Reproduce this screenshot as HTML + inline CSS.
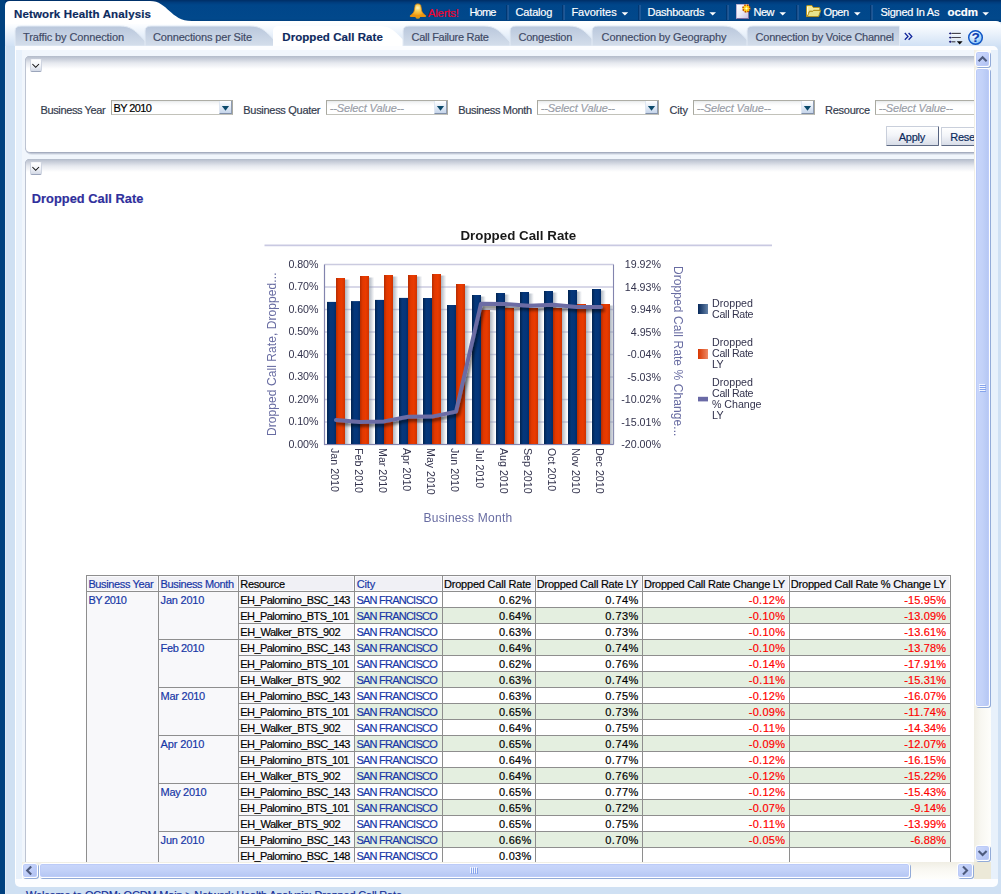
<!DOCTYPE html>
<html><head><meta charset="utf-8"><title>Network Health Analysis</title>
<style>
html,body{margin:0;padding:0;overflow:hidden}
body{width:1001px;height:894px;overflow:hidden;position:relative;background:#cfe0f3;font-family:"Liberation Sans",sans-serif}
.a{position:absolute;box-sizing:border-box}
.t{position:absolute;white-space:nowrap;margin:0;padding:0;-webkit-text-stroke:0.18px currentColor}
.g .t{-webkit-text-stroke:0}
svg{position:absolute;overflow:visible}
</style></head><body>
<div class="a" style="left:0;top:0;width:1001px;height:894px;overflow:hidden;background:#cfe0f3">
<div class="a" style="left:0px;top:0px;width:1001px;height:22px;background:linear-gradient(#002e66 0,#003d7e 2.5px,#00468a 5px,#01488b 19px,#003f80 21px)"></div>
<div class="a" style="left:0px;top:0px;width:5px;height:894px;background:#00417f"></div>
<svg width="1001" height="60" style="left:0;top:0">
<defs>
<linearGradient id="rowbg" x1="0" y1="0" x2="0" y2="1"><stop offset="0" stop-color="#ffffff"/><stop offset="0.15" stop-color="#fbfdff"/><stop offset="1" stop-color="#cfe0f4"/></linearGradient>
<linearGradient id="tabg" x1="0" y1="0" x2="0" y2="1"><stop offset="0" stop-color="#b9c7dc"/><stop offset="1" stop-color="#d4deeb"/></linearGradient>
</defs>
<path d="M5 47 L5 21 L996 21 Q1001 21 1001 26 L1001 47 Z" fill="url(#rowbg)"/>
<path d="M5 24 L5 6 Q5 1 10 1 L150 1 C168 1 170 21 192 21 L192 24 Z" fill="#ffffff"/>
</svg>
<div class="t" style="left:14.00px;top:6.02px;font-size:11.5px;line-height:16px;color:#0b2a5e;font-weight:bold;letter-spacing:0.146px;">Network Health Analysis</div>
<div class="t" style="left:428.00px;top:4.69px;font-size:11px;line-height:16px;color:#f5002a;letter-spacing:-0.079px;">Alerts!</div>
<div class="t" style="left:469.40px;top:4.19px;font-size:11px;line-height:16px;color:#ffffff;letter-spacing:-0.781px;">Home</div>
<div class="t" style="left:515.60px;top:4.19px;font-size:11px;line-height:16px;color:#ffffff;letter-spacing:-0.186px;">Catalog</div>
<div class="t" style="left:571.40px;top:4.19px;font-size:11px;line-height:16px;color:#ffffff;">Favorites</div>
<div class="t" style="left:647.60px;top:4.19px;font-size:11px;line-height:16px;color:#ffffff;letter-spacing:-0.279px;">Dashboards</div>
<div class="t" style="left:753.60px;top:4.19px;font-size:11px;line-height:16px;color:#ffffff;letter-spacing:-0.603px;">New</div>
<div class="t" style="left:823.60px;top:4.19px;font-size:11px;line-height:16px;color:#ffffff;letter-spacing:-0.503px;">Open</div>
<div class="t" style="left:880.40px;top:4.19px;font-size:11px;line-height:16px;color:#ffffff;letter-spacing:-0.252px;">Signed In As</div>
<div class="t" style="left:947.60px;top:4.02px;font-size:11.5px;line-height:16px;color:#ffffff;font-weight:bold;letter-spacing:-0.090px;">ocdm</div>
<svg width="1001" height="22" style="left:0;top:0"><line x1="507.0" y1="5" x2="507.0" y2="20" stroke="#00285a" stroke-width="1"/><line x1="508.0" y1="5" x2="508.0" y2="20" stroke="#3a6aa6" stroke-width="1"/><line x1="563.0" y1="5" x2="563.0" y2="20" stroke="#00285a" stroke-width="1"/><line x1="564.0" y1="5" x2="564.0" y2="20" stroke="#3a6aa6" stroke-width="1"/><line x1="639.0" y1="5" x2="639.0" y2="20" stroke="#00285a" stroke-width="1"/><line x1="640.0" y1="5" x2="640.0" y2="20" stroke="#3a6aa6" stroke-width="1"/><line x1="727.0" y1="5" x2="727.0" y2="20" stroke="#00285a" stroke-width="1"/><line x1="728.0" y1="5" x2="728.0" y2="20" stroke="#3a6aa6" stroke-width="1"/><line x1="797.0" y1="5" x2="797.0" y2="20" stroke="#00285a" stroke-width="1"/><line x1="798.0" y1="5" x2="798.0" y2="20" stroke="#3a6aa6" stroke-width="1"/><line x1="871.0" y1="5" x2="871.0" y2="20" stroke="#00285a" stroke-width="1"/><line x1="872.0" y1="5" x2="872.0" y2="20" stroke="#3a6aa6" stroke-width="1"/><path d="M621.6 12.2 L628.2 12.2 L624.9 15.6 Z" fill="#ffffff"/><path d="M709.4 12.2 L716.0 12.2 L712.6999999999999 15.6 Z" fill="#ffffff"/><path d="M779.4 12.2 L786.0 12.2 L782.6999999999999 15.6 Z" fill="#ffffff"/><path d="M854 12.2 L860.6 12.2 L857.3 15.6 Z" fill="#ffffff"/><path d="M982.4 12.2 L989.0 12.2 L985.6999999999999 15.6 Z" fill="#ffffff"/><defs><radialGradient id="bellg" cx="0.48" cy="0.32" r="0.62"><stop offset="0" stop-color="#fff6c4"/><stop offset="0.35" stop-color="#f9d25c"/><stop offset="0.8" stop-color="#f3ad25"/><stop offset="1" stop-color="#ea920e"/></radialGradient></defs>
<ellipse cx="417.8" cy="17.2" rx="2.1" ry="1.6" fill="#d79a18"/>
<path d="M415 6.4 C415 4.6 416.2 3.9 417.9 3.9 C419.6 3.9 420.9 4.6 420.9 6.4 L421.6 10.6 C421.9 12.6 423.6 14.2 425.6 15.6 L425.6 16.5 L410.3 16.5 L410.3 15.6 C412.3 14.2 414 12.6 414.3 10.6 Z" fill="url(#bellg)" stroke="#e58c0a" stroke-width="0.8"/>
<path d="M410.6 16.1 L425.4 16.1" stroke="#ef9a14" stroke-width="1.2"/>
<defs><linearGradient id="docg" x1="0" y1="0" x2="1" y2="1"><stop offset="0" stop-color="#ffffff"/><stop offset="0.5" stop-color="#ecebf7"/><stop offset="1" stop-color="#c4c0e2"/></linearGradient>
<radialGradient id="starg" cx="0.5" cy="0.5" r="0.5"><stop offset="0" stop-color="#fffbe0"/><stop offset="0.45" stop-color="#ffe02a"/><stop offset="1" stop-color="#ffc400"/></radialGradient></defs>
<rect x="737.2" y="5.2" width="12.4" height="14.2" fill="#00306a" opacity="0.45"/>
<rect x="736.5" y="4.5" width="12" height="14" fill="url(#docg)" stroke="#7d6fa2" stroke-width="1"/>
<path d="M736.5 18.5 L736.5 4.5 L748.5 4.5" fill="none" stroke="#b9b2d3" stroke-width="1"/>
<circle cx="746.4" cy="8.4" r="3.5" fill="#f2b21a" stroke="#b84200" stroke-width="1.5" stroke-dasharray="1.6 1.15"/>
<path d="M746.4 3.9 L747.5 7.3 L750.9 8.4 L747.5 9.5 L746.4 12.9 L745.3 9.5 L741.9 8.4 L745.3 7.3 Z" fill="url(#starg)"/>
<path d="M744 6 L745.7 7.7 M748.8 6 L747.1 7.7 M744 10.8 L745.7 9.1 M748.8 10.8 L747.1 9.1" stroke="#ffd21e" stroke-width="1.1"/>
<path d="M807 17.3 L821.6 17.3 L821.6 11" stroke="#002a60" stroke-width="1" fill="none" opacity="0.5"/>
<path d="M806.5 16.6 L806.5 6.5 Q806.5 5.5 807.5 5.5 L811.9 5.5 L813.3 7.5 L818.8 7.5 Q819.8 7.5 819.8 8.5 L819.8 10.4 L813.6 10.4 L812.8 11.3 L809.4 11.3 L807.4 16.6 Z" fill="#f1ea9c" stroke="#b5901a" stroke-width="1" stroke-linejoin="round"/>
<path d="M807.3 16.6 L809.5 11.3 L812.9 11.3 L813.7 10.4 L820.7 10.4 L818.6 16.6 Z" fill="#e8e38c" stroke="#b5901a" stroke-width="1" stroke-linejoin="round"/>
<path d="M807.6 7 L807.6 14.5" stroke="#fffde0" stroke-width="1"/>
</svg>
<svg width="1001" height="60" style="left:0;top:0"><path d="M15 46 L15 31 Q15 26 21 26 L120 26 C131 26 135 31 140 35.5 L150 46 Z" fill="url(#tabg)" stroke="#e3ebf5" stroke-width="1"/><path d="M145 46 L145 31 Q145 26 151 26 L250 26 C261 26 265 31 270 35.5 L280 46 Z" fill="url(#tabg)" stroke="#e3ebf5" stroke-width="1"/><path d="M273 46 L273 31 Q273 26 279 26 L379 26 C390 26 394 31 399 35.5 L409 46 Z" fill="#ffffff"/><path d="M403 46 L403 31 Q403 26 409 26 L484 26 C495 26 499 31 504 35.5 L514 46 Z" fill="url(#tabg)" stroke="#e3ebf5" stroke-width="1"/><path d="M510 46 L510 31 Q510 26 516 26 L569 26 C580 26 584 31 589 35.5 L599 46 Z" fill="url(#tabg)" stroke="#e3ebf5" stroke-width="1"/><path d="M592 46 L592 31 Q592 26 598 26 L723 26 C734 26 738 31 743 35.5 L753 46 Z" fill="url(#tabg)" stroke="#e3ebf5" stroke-width="1"/><path d="M747 46 L747 31 Q747 26 753 26 L899.5 26 L899.5 46 Z" fill="url(#tabg)" stroke="#e3ebf5" stroke-width="1"/></svg>
<div class="t" style="left:23.00px;top:28.89px;font-size:11px;line-height:16px;color:#3f4a66;letter-spacing:-0.116px;">Traffic by Connection</div>
<div class="t" style="left:153.00px;top:28.89px;font-size:11px;line-height:16px;color:#3f4a66;letter-spacing:-0.164px;">Connections per Site</div>
<div class="t" style="left:282.30px;top:28.92px;font-size:11.5px;line-height:16px;color:#0f2a5f;font-weight:bold;letter-spacing:0.051px;">Dropped Call Rate</div>
<div class="t" style="left:411.60px;top:28.89px;font-size:11px;line-height:16px;color:#3f4a66;letter-spacing:-0.283px;">Call Failure Rate</div>
<div class="t" style="left:518.40px;top:28.89px;font-size:11px;line-height:16px;color:#3f4a66;letter-spacing:-0.183px;">Congestion</div>
<div class="t" style="left:601.60px;top:28.89px;font-size:11px;line-height:16px;color:#3f4a66;letter-spacing:-0.137px;">Connection by Geography</div>
<div class="t" style="left:755.60px;top:28.89px;font-size:11px;line-height:16px;color:#3f4a66;letter-spacing:-0.228px;">Connection by Voice Channel</div>
<svg width="1001" height="60" style="left:0;top:0">
<path d="M904.8 33 L908 36.4 L904.8 39.8 M908.6 33 L911.8 36.4 L908.6 39.8" fill="none" stroke="#10249a" stroke-width="1.3"/>
<g stroke="#3c3c46" stroke-width="1.1"><line x1="951.5" y1="33.4" x2="960.8" y2="33.4"/><line x1="951.5" y1="37.6" x2="960.8" y2="37.6"/><line x1="951.5" y1="41.8" x2="955.4" y2="41.8"/></g>
<g stroke="#ffffff" stroke-width="0.9" opacity="0.8"><line x1="952" y1="34.5" x2="961" y2="34.5"/><line x1="952" y1="38.7" x2="961" y2="38.7"/></g>
<g fill="#1c1c78"><path d="M948.8 33.4 L950.2 32.2 L951.6 33.4 L950.2 34.6 Z"/><path d="M948.8 37.6 L950.2 36.4 L951.6 37.6 L950.2 38.8 Z"/><path d="M948.8 41.8 L950.2 40.6 L951.6 41.8 L950.2 43 Z"/></g>
<path d="M956.8 41.2 L962.6 41.2 L959.7 44.5 Z" fill="#0a0a0a"/>
<defs><radialGradient id="hg" cx="0.4" cy="0.3" r="0.8"><stop offset="0" stop-color="#ffffff"/><stop offset="0.5" stop-color="#c2e2fe"/><stop offset="1" stop-color="#68b2f4"/></radialGradient></defs>
<circle cx="976" cy="38" r="7" fill="#5a7fb0" opacity="0.35"/><circle cx="975.5" cy="37.5" r="6.8" fill="url(#hg)" stroke="#0f55c6" stroke-width="1.45"/>
</svg>
<div class="t" style="left:971.48px;top:29.52px;font-size:13.5px;line-height:16px;color:#0a3cb0;font-weight:bold;">?</div>
<div class="a" style="left:5px;top:46px;width:10px;height:848px;background:#cfe0f2"></div>
<div class="a" style="left:5px;top:46px;width:1px;height:848px;background:#dde9f6"></div>
<div class="a" style="left:15px;top:46px;width:983px;height:841px;background:#fcfdff;border-radius:0 5px 5px 5px"></div>
<div class="a" style="left:16px;top:50px;width:6px;height:829px;background:#e8f1fb"></div>
<div class="a" style="left:15px;top:47px;width:1px;height:835px;background:#ffffff"></div>
<div class="a" style="left:991px;top:50px;width:7px;height:829px;background:#e8f1fb"></div>
<div class="t" style="left:26.00px;top:887.39px;font-size:11px;line-height:16px;color:#142e96;letter-spacing:-0.184px;">Welcome to OCDM: OCDM Main &gt; Network Health Analysis: Dropped Call Rate</div>
<div class="a" style="left:22px;top:50px;width:952px;height:812px;overflow:hidden;background:#f1f6fc"><div class="a" style="left:-22px;top:-50px;width:1001px;height:894px">
<div class="a" style="left:25px;top:56px;width:1100px;height:99px;border-radius:5px 0 0 7px;background:#dfe5ee"></div>
<div class="a" style="left:25px;top:56px;width:1100px;height:98px;border-radius:5px 0 0 6px;background:#c3cad8"></div>
<div class="a" style="left:25px;top:56px;width:1100px;height:97px;border-radius:5px 0 0 6px;background:#a5adbf"></div>
<div class="a" style="left:25px;top:56px;width:1100px;height:96px;border-radius:5px 0 0 5px;background:#bdc4d2"></div>
<div class="a" style="left:26px;top:56px;width:1100px;height:96px;border-radius:4px 0 0 4px;background:#ffffff;background-image:linear-gradient(#b3bbca 0,#c9cfda 3px,#e6e9ef 7px,#ffffff 13px)"></div>
<div class="a" style="left:29.7px;top:59px;width:12px;height:13px;border-radius:2px;background:linear-gradient(#ffffff 0,#f4f6fa 45%,#d3d9e6 100%);border:1px solid #cfd5e1;border-bottom-color:#9ba5bb;border-top-color:#f4f6fa"></div>
<svg width="12" height="13" style="left:29.7px;top:59px"><path d="M2.4 5 L5.7 8.3 L9 5" fill="none" stroke="#111" stroke-width="1.05"/></svg>
<div class="t" style="left:40.50px;top:101.89px;font-size:11px;line-height:16px;color:#333b4d;letter-spacing:-0.376px;">Business Year</div>
<div class="a" style="left:111px;top:100px;width:122px;height:15px;background:#fff;background-image:linear-gradient(#e6e9ea 0,#f6f7f8 2px,#ffffff 5px);border:1px solid #a9a9a0;border-top-color:#adada5;border-bottom-color:#c2c2ba"></div>
<div class="t" style="left:113.50px;top:100.19px;font-size:11px;line-height:16px;color:#000;letter-spacing:-0.617px;">BY 2010</div>
<div class="a" style="left:219px;top:101px;width:13px;height:13px;background:linear-gradient(#ffffff 0,#e6eef8 45%,#c6d5ea 100%);border:1px solid #dfe7f2;border-top:none;border-bottom-color:#7f8ea8;border-right-color:#8f9cb2"></div>
<svg width="13" height="13" style="left:219px;top:101px"><path d="M2.9 5 L10.1 5 L6.5 9.7 Z" fill="#0c4a6c"/></svg>
<div class="t" style="left:243.30px;top:101.89px;font-size:11px;line-height:16px;color:#333b4d;letter-spacing:-0.294px;">Business Quater</div>
<div class="a" style="left:326px;top:100px;width:122px;height:15px;background:#fff;background-image:linear-gradient(#e6e9ea 0,#f6f7f8 2px,#ffffff 5px);border:1px solid #a9a9a0;border-top-color:#adada5;border-bottom-color:#c2c2ba"></div>
<div class="t" style="left:329.70px;top:100.19px;font-size:11px;line-height:16px;color:#9a9ea8;font-style:italic;letter-spacing:-0.114px;">--Select Value--</div>
<div class="a" style="left:434px;top:101px;width:13px;height:13px;background:linear-gradient(#ffffff 0,#e6eef8 45%,#c6d5ea 100%);border:1px solid #dfe7f2;border-top:none;border-bottom-color:#7f8ea8;border-right-color:#8f9cb2"></div>
<svg width="13" height="13" style="left:434px;top:101px"><path d="M2.9 5 L10.1 5 L6.5 9.7 Z" fill="#0c4a6c"/></svg>
<div class="t" style="left:458.30px;top:101.89px;font-size:11px;line-height:16px;color:#333b4d;letter-spacing:-0.351px;">Business Month</div>
<div class="a" style="left:537px;top:100px;width:122px;height:15px;background:#fff;background-image:linear-gradient(#e6e9ea 0,#f6f7f8 2px,#ffffff 5px);border:1px solid #a9a9a0;border-top-color:#adada5;border-bottom-color:#c2c2ba"></div>
<div class="t" style="left:540.70px;top:100.19px;font-size:11px;line-height:16px;color:#9a9ea8;font-style:italic;letter-spacing:-0.114px;">--Select Value--</div>
<div class="a" style="left:645px;top:101px;width:13px;height:13px;background:linear-gradient(#ffffff 0,#e6eef8 45%,#c6d5ea 100%);border:1px solid #dfe7f2;border-top:none;border-bottom-color:#7f8ea8;border-right-color:#8f9cb2"></div>
<svg width="13" height="13" style="left:645px;top:101px"><path d="M2.9 5 L10.1 5 L6.5 9.7 Z" fill="#0c4a6c"/></svg>
<div class="t" style="left:669.50px;top:101.89px;font-size:11px;line-height:16px;color:#333b4d;letter-spacing:-0.148px;">City</div>
<div class="a" style="left:693px;top:100px;width:122px;height:15px;background:#fff;background-image:linear-gradient(#e6e9ea 0,#f6f7f8 2px,#ffffff 5px);border:1px solid #a9a9a0;border-top-color:#adada5;border-bottom-color:#c2c2ba"></div>
<div class="t" style="left:696.70px;top:100.19px;font-size:11px;line-height:16px;color:#9a9ea8;font-style:italic;letter-spacing:-0.114px;">--Select Value--</div>
<div class="a" style="left:801px;top:101px;width:13px;height:13px;background:linear-gradient(#ffffff 0,#e6eef8 45%,#c6d5ea 100%);border:1px solid #dfe7f2;border-top:none;border-bottom-color:#7f8ea8;border-right-color:#8f9cb2"></div>
<svg width="13" height="13" style="left:801px;top:101px"><path d="M2.9 5 L10.1 5 L6.5 9.7 Z" fill="#0c4a6c"/></svg>
<div class="t" style="left:825.10px;top:101.89px;font-size:11px;line-height:16px;color:#333b4d;letter-spacing:-0.283px;">Resource</div>
<div class="a" style="left:875px;top:100px;width:122px;height:15px;background:#fff;background-image:linear-gradient(#e6e9ea 0,#f6f7f8 2px,#ffffff 5px);border:1px solid #a9a9a0;border-top-color:#adada5;border-bottom-color:#c2c2ba"></div>
<div class="t" style="left:878.70px;top:100.19px;font-size:11px;line-height:16px;color:#9a9ea8;font-style:italic;letter-spacing:-0.114px;">--Select Value--</div>
<div class="a" style="left:885.5px;top:126px;width:53px;height:20px;background:linear-gradient(#ffffff 0,#f3f5f9 45%,#d8dde8 100%);border:1px solid #c9cfdb;border-bottom-color:#5e6a84;border-right-color:#566380;border-radius:1px"></div>
<div class="t" style="left:898.80px;top:128.79px;font-size:11px;line-height:16px;color:#0b2a5c;letter-spacing:-0.279px;">Apply</div>
<div class="a" style="left:941px;top:127px;width:53px;height:19px;background:linear-gradient(#ffffff 0,#f3f5f9 45%,#d8dde8 100%);border:1px solid #c9cfdb;border-bottom-color:#5e6a84;border-right-color:#566380;border-radius:1px"></div>
<div class="t" style="left:950.30px;top:128.79px;font-size:11px;line-height:16px;color:#0b2a5c;letter-spacing:-0.309px;">Reset</div>
<div class="a" style="left:25px;top:159px;width:1100px;height:803px;border-radius:5px 0 0 7px;background:#dfe5ee"></div>
<div class="a" style="left:25px;top:159px;width:1100px;height:802px;border-radius:5px 0 0 6px;background:#c3cad8"></div>
<div class="a" style="left:25px;top:159px;width:1100px;height:801px;border-radius:5px 0 0 6px;background:#a5adbf"></div>
<div class="a" style="left:25px;top:159px;width:1100px;height:800px;border-radius:5px 0 0 5px;background:#bdc4d2"></div>
<div class="a" style="left:26px;top:159px;width:1100px;height:800px;border-radius:4px 0 0 4px;background:#ffffff;background-image:linear-gradient(#b3bbca 0,#c9cfda 3px,#e6e9ef 7px,#ffffff 13px)"></div>
<div class="a" style="left:29.7px;top:162px;width:12px;height:13px;border-radius:2px;background:linear-gradient(#ffffff 0,#f4f6fa 45%,#d3d9e6 100%);border:1px solid #cfd5e1;border-bottom-color:#9ba5bb;border-top-color:#f4f6fa"></div>
<svg width="12" height="13" style="left:29.7px;top:162px"><path d="M2.4 5 L5.7 8.3 L9 5" fill="none" stroke="#111" stroke-width="1.05"/></svg>
<div class="t" style="left:31.80px;top:190.56px;font-size:12.8px;line-height:16px;color:#2f2f9c;font-weight:bold;letter-spacing:0.041px;">Dropped Call Rate</div>
<svg width="1001" height="894" style="left:0;top:0"><defs>
<linearGradient id="gb" x1="0" y1="0" x2="1" y2="0"><stop offset="0" stop-color="#02234f"/><stop offset="0.35" stop-color="#05377a"/><stop offset="0.7" stop-color="#04357a"/><stop offset="1" stop-color="#032c66"/></linearGradient>
<linearGradient id="gr" x1="0" y1="0" x2="1" y2="0"><stop offset="0" stop-color="#b42c00"/><stop offset="0.3" stop-color="#e23800"/><stop offset="0.65" stop-color="#ea3b00"/><stop offset="1" stop-color="#cf3300"/></linearGradient>
<linearGradient id="gsh" x1="0" y1="0" x2="1" y2="0"><stop offset="0" stop-color="#7a8898" stop-opacity="0.62"/><stop offset="0.5" stop-color="#8f9aaa" stop-opacity="0.36"/><stop offset="1" stop-color="#b0b6c4" stop-opacity="0.0"/></linearGradient>
<linearGradient id="lg1" x1="0" y1="0" x2="1" y2="0"><stop offset="0" stop-color="#06285a"/><stop offset="1" stop-color="#6482a8"/></linearGradient>
<linearGradient id="lg2" x1="0" y1="0" x2="1" y2="0"><stop offset="0" stop-color="#d83600"/><stop offset="1" stop-color="#ee8a66"/></linearGradient>
<filter id="lsh" x="-5%" y="-5%" width="110%" height="115%"><feGaussianBlur in="SourceAlpha" stdDeviation="1.7"/><feOffset dx="2" dy="2.5"/><feComponentTransfer><feFuncA type="linear" slope="0.5"/></feComponentTransfer><feMerge><feMergeNode/><feMergeNode in="SourceGraphic"/></feMerge></filter>
</defs><line x1="264.5" y1="245.4" x2="772" y2="245.4" stroke="#c9c9e2" stroke-width="1.8"/><rect x="324.5" y="264.5" width="289.0" height="180.0" fill="#ffffff"/><line x1="324.5" y1="264.50" x2="613.5" y2="264.50" stroke="#cbcbe0" stroke-width="1.3"/><line x1="324.5" y1="287.00" x2="613.5" y2="287.00" stroke="#cbcbe0" stroke-width="1.3"/><line x1="324.5" y1="309.50" x2="613.5" y2="309.50" stroke="#cbcbe0" stroke-width="1.3"/><line x1="324.5" y1="332.00" x2="613.5" y2="332.00" stroke="#cbcbe0" stroke-width="1.3"/><line x1="324.5" y1="354.50" x2="613.5" y2="354.50" stroke="#cbcbe0" stroke-width="1.3"/><line x1="324.5" y1="377.00" x2="613.5" y2="377.00" stroke="#cbcbe0" stroke-width="1.3"/><line x1="324.5" y1="399.50" x2="613.5" y2="399.50" stroke="#cbcbe0" stroke-width="1.3"/><line x1="324.5" y1="422.00" x2="613.5" y2="422.00" stroke="#cbcbe0" stroke-width="1.3"/><line x1="324.5" y1="444.50" x2="613.5" y2="444.50" stroke="#cbcbe0" stroke-width="1.3"/><line x1="613.5" y1="264.5" x2="613.5" y2="444.5" stroke="#8284ae" stroke-width="1.1"/><rect x="345" y="279.5" width="5.5" height="165.0" fill="url(#gsh)"/><rect x="369" y="277.5" width="5.5" height="167.0" fill="url(#gsh)"/><rect x="393" y="276.5" width="5.5" height="168.0" fill="url(#gsh)"/><rect x="417" y="276.5" width="5.5" height="168.0" fill="url(#gsh)"/><rect x="441" y="275.5" width="5.5" height="169.0" fill="url(#gsh)"/><rect x="465" y="285.5" width="5.5" height="159.0" fill="url(#gsh)"/><rect x="490" y="311.5" width="5.5" height="133.0" fill="url(#gsh)"/><rect x="481" y="296.5" width="5" height="15.0" fill="url(#gsh)"/><rect x="514" y="309.5" width="5.5" height="135.0" fill="url(#gsh)"/><rect x="505" y="294.5" width="5" height="15.0" fill="url(#gsh)"/><rect x="538" y="309.5" width="5.5" height="135.0" fill="url(#gsh)"/><rect x="529" y="293.5" width="5" height="16.0" fill="url(#gsh)"/><rect x="562" y="309.5" width="5.5" height="135.0" fill="url(#gsh)"/><rect x="553" y="292.5" width="5" height="17.0" fill="url(#gsh)"/><rect x="586" y="305.5" width="5.5" height="139.0" fill="url(#gsh)"/><rect x="577" y="291.5" width="5" height="14.0" fill="url(#gsh)"/><rect x="610" y="305.5" width="5.5" height="139.0" fill="url(#gsh)"/><rect x="601" y="290.5" width="5" height="15.0" fill="url(#gsh)"/><rect x="327" y="301.9" width="9" height="142.6" fill="url(#gb)"/><rect x="336" y="278.0" width="9" height="166.5" fill="url(#gr)"/><rect x="351" y="301.1" width="9" height="143.4" fill="url(#gb)"/><rect x="360" y="276.0" width="9" height="168.5" fill="url(#gr)"/><rect x="375" y="299.9" width="9" height="144.6" fill="url(#gb)"/><rect x="384" y="275.0" width="9" height="169.5" fill="url(#gr)"/><rect x="399" y="297.9" width="9" height="146.6" fill="url(#gb)"/><rect x="408" y="275.0" width="9" height="169.5" fill="url(#gr)"/><rect x="423" y="298.0" width="9" height="146.5" fill="url(#gb)"/><rect x="432" y="274.0" width="9" height="170.5" fill="url(#gr)"/><rect x="447" y="305.0" width="9" height="139.5" fill="url(#gb)"/><rect x="456" y="284.0" width="9" height="160.5" fill="url(#gr)"/><rect x="472" y="295.0" width="9" height="149.5" fill="url(#gb)"/><rect x="481" y="310.0" width="9" height="134.5" fill="url(#gr)"/><rect x="496" y="293.0" width="9" height="151.5" fill="url(#gb)"/><rect x="505" y="308.0" width="9" height="136.5" fill="url(#gr)"/><rect x="520" y="292.0" width="9" height="152.5" fill="url(#gb)"/><rect x="529" y="308.0" width="9" height="136.5" fill="url(#gr)"/><rect x="544" y="291.0" width="9" height="153.5" fill="url(#gb)"/><rect x="553" y="308.0" width="9" height="136.5" fill="url(#gr)"/><rect x="568" y="290.0" width="9" height="154.5" fill="url(#gb)"/><rect x="577" y="304.0" width="9" height="140.5" fill="url(#gr)"/><rect x="592" y="289.0" width="9" height="155.5" fill="url(#gb)"/><rect x="601" y="304.0" width="9" height="140.5" fill="url(#gr)"/><line x1="324.5" y1="264.5" x2="324.5" y2="445.1" stroke="#8284ae" stroke-width="1.2"/><line x1="324.5" y1="444.5" x2="613.5" y2="444.5" stroke="#8284ae" stroke-width="1.2"/><path d="M336 420 L360 422 L384 421.4 L408 416.8 L432 416.6 L456 411.6 L481 303.8 L505 304.1 L529 305.8 L553 304.8 L577 306.9 L601 307.1" fill="none" stroke="#6c6ca4" stroke-width="4" stroke-linejoin="round" stroke-linecap="round" filter="url(#lsh)"/><rect x="698" y="304" width="10" height="10" fill="url(#lg1)"/><rect x="698" y="349" width="10" height="10" fill="url(#lg2)"/><rect x="698" y="396.8" width="10" height="4.6" fill="#6a6aa6"/></svg>
<div class="a g" style="left:0;top:0;width:1001px;height:894px;opacity:0.999">
<div class="t" style="left:460.40px;top:228.08px;font-size:13.33px;line-height:16px;color:#1a1a1a;font-weight:bold;letter-spacing:0.016px;">Dropped Call Rate</div>
<div class="t" style="left:288.40px;top:255.50px;font-size:10.67px;line-height:16px;color:#33334d;letter-spacing:-0.039px;">0.80%</div>
<div class="t" style="left:288.40px;top:278.00px;font-size:10.67px;line-height:16px;color:#33334d;letter-spacing:-0.039px;">0.70%</div>
<div class="t" style="left:288.40px;top:300.50px;font-size:10.67px;line-height:16px;color:#33334d;letter-spacing:-0.039px;">0.60%</div>
<div class="t" style="left:288.40px;top:323.00px;font-size:10.67px;line-height:16px;color:#33334d;letter-spacing:-0.039px;">0.50%</div>
<div class="t" style="left:288.40px;top:345.50px;font-size:10.67px;line-height:16px;color:#33334d;letter-spacing:-0.039px;">0.40%</div>
<div class="t" style="left:288.40px;top:368.00px;font-size:10.67px;line-height:16px;color:#33334d;letter-spacing:-0.039px;">0.30%</div>
<div class="t" style="left:288.40px;top:390.50px;font-size:10.67px;line-height:16px;color:#33334d;letter-spacing:-0.039px;">0.20%</div>
<div class="t" style="left:288.40px;top:413.00px;font-size:10.67px;line-height:16px;color:#33334d;letter-spacing:-0.039px;">0.10%</div>
<div class="t" style="left:288.40px;top:435.50px;font-size:10.67px;line-height:16px;color:#33334d;letter-spacing:-0.039px;">0.00%</div>
<div class="t" style="left:624.81px;top:256.30px;font-size:10.67px;line-height:16px;color:#33334d;">19.92%</div>
<div class="t" style="left:624.81px;top:278.80px;font-size:10.67px;line-height:16px;color:#33334d;">14.93%</div>
<div class="t" style="left:630.75px;top:301.30px;font-size:10.67px;line-height:16px;color:#33334d;">9.94%</div>
<div class="t" style="left:630.75px;top:323.80px;font-size:10.67px;line-height:16px;color:#33334d;">4.95%</div>
<div class="t" style="left:627.19px;top:346.30px;font-size:10.67px;line-height:16px;color:#33334d;">-0.04%</div>
<div class="t" style="left:627.19px;top:368.80px;font-size:10.67px;line-height:16px;color:#33334d;">-5.03%</div>
<div class="t" style="left:621.26px;top:391.30px;font-size:10.67px;line-height:16px;color:#33334d;">-10.02%</div>
<div class="t" style="left:621.26px;top:413.80px;font-size:10.67px;line-height:16px;color:#33334d;">-15.01%</div>
<div class="t" style="left:621.26px;top:436.30px;font-size:10.67px;line-height:16px;color:#33334d;">-20.00%</div>
<div class="t" style="left:331.20px;top:448.2px;font-size:10.67px;line-height:16px;color:#33334d;transform-origin:0 0;transform:rotate(90deg) translate(0,-11.70px)">Jan 2010</div>
<div class="t" style="left:355.20px;top:448.2px;font-size:10.67px;line-height:16px;color:#33334d;transform-origin:0 0;transform:rotate(90deg) translate(0,-11.70px)">Feb 2010</div>
<div class="t" style="left:379.20px;top:448.2px;font-size:10.67px;line-height:16px;color:#33334d;transform-origin:0 0;transform:rotate(90deg) translate(0,-11.70px)">Mar 2010</div>
<div class="t" style="left:403.20px;top:448.2px;font-size:10.67px;line-height:16px;color:#33334d;transform-origin:0 0;transform:rotate(90deg) translate(0,-11.70px)">Apr 2010</div>
<div class="t" style="left:427.20px;top:448.2px;font-size:10.67px;line-height:16px;color:#33334d;transform-origin:0 0;transform:rotate(90deg) translate(0,-11.70px)">May 2010</div>
<div class="t" style="left:451.20px;top:448.2px;font-size:10.67px;line-height:16px;color:#33334d;transform-origin:0 0;transform:rotate(90deg) translate(0,-11.70px)">Jun 2010</div>
<div class="t" style="left:476.20px;top:448.2px;font-size:10.67px;line-height:16px;color:#33334d;transform-origin:0 0;transform:rotate(90deg) translate(0,-11.70px)">Jul 2010</div>
<div class="t" style="left:500.20px;top:448.2px;font-size:10.67px;line-height:16px;color:#33334d;transform-origin:0 0;transform:rotate(90deg) translate(0,-11.70px)">Aug 2010</div>
<div class="t" style="left:524.20px;top:448.2px;font-size:10.67px;line-height:16px;color:#33334d;transform-origin:0 0;transform:rotate(90deg) translate(0,-11.70px)">Sep 2010</div>
<div class="t" style="left:548.20px;top:448.2px;font-size:10.67px;line-height:16px;color:#33334d;transform-origin:0 0;transform:rotate(90deg) translate(0,-11.70px)">Oct 2010</div>
<div class="t" style="left:572.20px;top:448.2px;font-size:10.67px;line-height:16px;color:#33334d;transform-origin:0 0;transform:rotate(90deg) translate(0,-11.70px)">Nov 2010</div>
<div class="t" style="left:596.20px;top:448.2px;font-size:10.67px;line-height:16px;color:#33334d;transform-origin:0 0;transform:rotate(90deg) translate(0,-11.70px)">Dec 2010</div>
<div class="t" style="left:276.3px;top:436.2px;font-size:12px;line-height:16px;letter-spacing:0.074px;color:#686ca2;transform-origin:0 0;transform:rotate(-90deg) translate(0,-12.16px)">Dropped Call Rate, Dropped...</div>
<div class="t" style="left:674.2px;top:266px;font-size:12px;line-height:16px;letter-spacing:0.082px;color:#686ca2;transform-origin:0 0;transform:rotate(90deg) translate(0,-12.16px)">Dropped Call Rate % Change...</div>
<div class="t" style="left:423.60px;top:509.84px;font-size:12px;line-height:16px;color:#686ca2;letter-spacing:0.248px;">Business Month</div>
<div class="t" style="left:712.00px;top:295.30px;font-size:10.67px;line-height:16px;color:#33334d;letter-spacing:0.012px;">Dropped</div>
<div class="t" style="left:712.00px;top:306.30px;font-size:10.67px;line-height:16px;color:#33334d;letter-spacing:-0.285px;">Call Rate</div>
<div class="t" style="left:712.00px;top:333.90px;font-size:10.67px;line-height:16px;color:#33334d;letter-spacing:0.012px;">Dropped</div>
<div class="t" style="left:712.00px;top:344.90px;font-size:10.67px;line-height:16px;color:#33334d;letter-spacing:-0.285px;">Call Rate</div>
<div class="t" style="left:712.00px;top:355.90px;font-size:10.67px;line-height:16px;color:#33334d;letter-spacing:-0.659px;">LY</div>
<div class="t" style="left:712.00px;top:373.90px;font-size:10.67px;line-height:16px;color:#33334d;letter-spacing:0.012px;">Dropped</div>
<div class="t" style="left:712.00px;top:384.90px;font-size:10.67px;line-height:16px;color:#33334d;letter-spacing:-0.285px;">Call Rate</div>
<div class="t" style="left:712.00px;top:395.90px;font-size:10.67px;line-height:16px;color:#33334d;letter-spacing:-0.033px;">% Change</div>
<div class="t" style="left:712.00px;top:406.90px;font-size:10.67px;line-height:16px;color:#33334d;letter-spacing:-0.659px;">LY</div>
</div>
<div class="a" style="left:86px;top:575px;width:865px;height:400px;background:#8e8e8e"></div>
<div class="a" style="left:87px;top:576px;width:71px;height:15px;background:#f0f0f5;box-shadow:inset 0 0 0 1px #fafafc"></div>
<div class="a" style="left:159px;top:576px;width:79px;height:15px;background:#f0f0f5;box-shadow:inset 0 0 0 1px #fafafc"></div>
<div class="a" style="left:239px;top:576px;width:115px;height:15px;background:#f0f0f5;box-shadow:inset 0 0 0 1px #fafafc"></div>
<div class="a" style="left:355px;top:576px;width:87px;height:15px;background:#f0f0f5;box-shadow:inset 0 0 0 1px #fafafc"></div>
<div class="a" style="left:443px;top:576px;width:92px;height:15px;background:#f0f0f5;box-shadow:inset 0 0 0 1px #fafafc"></div>
<div class="a" style="left:536px;top:576px;width:106px;height:15px;background:#f0f0f5;box-shadow:inset 0 0 0 1px #fafafc"></div>
<div class="a" style="left:643px;top:576px;width:146px;height:15px;background:#f0f0f5;box-shadow:inset 0 0 0 1px #fafafc"></div>
<div class="a" style="left:790px;top:576px;width:160px;height:15px;background:#f0f0f5;box-shadow:inset 0 0 0 1px #fafafc"></div>
<div class="a" style="left:87px;top:592px;width:71px;height:400px;background:#f8f8fa"></div>
<div class="a" style="left:159px;top:592px;width:79px;height:47px;background:#f8f8fa"></div>
<div class="a" style="left:159px;top:640px;width:79px;height:47px;background:#f8f8fa"></div>
<div class="a" style="left:159px;top:688px;width:79px;height:47px;background:#f8f8fa"></div>
<div class="a" style="left:159px;top:736px;width:79px;height:47px;background:#f8f8fa"></div>
<div class="a" style="left:159px;top:784px;width:79px;height:47px;background:#f8f8fa"></div>
<div class="a" style="left:159px;top:832px;width:79px;height:47px;background:#f8f8fa"></div>
<div class="a" style="left:239px;top:592px;width:115px;height:15px;background:#f8f8fa"></div>
<div class="a" style="left:355px;top:592px;width:87px;height:15px;background:#ffffff"></div>
<div class="a" style="left:443px;top:592px;width:92px;height:15px;background:#ffffff"></div>
<div class="a" style="left:536px;top:592px;width:106px;height:15px;background:#ffffff"></div>
<div class="a" style="left:643px;top:592px;width:146px;height:15px;background:#ffffff"></div>
<div class="a" style="left:790px;top:592px;width:160px;height:15px;background:#ffffff"></div>
<div class="a" style="left:239px;top:608px;width:115px;height:15px;background:#f8f8fa"></div>
<div class="a" style="left:355px;top:608px;width:87px;height:15px;background:#e4efe0"></div>
<div class="a" style="left:443px;top:608px;width:92px;height:15px;background:#e4efe0"></div>
<div class="a" style="left:536px;top:608px;width:106px;height:15px;background:#e4efe0"></div>
<div class="a" style="left:643px;top:608px;width:146px;height:15px;background:#e4efe0"></div>
<div class="a" style="left:790px;top:608px;width:160px;height:15px;background:#e4efe0"></div>
<div class="a" style="left:239px;top:624px;width:115px;height:15px;background:#f8f8fa"></div>
<div class="a" style="left:355px;top:624px;width:87px;height:15px;background:#ffffff"></div>
<div class="a" style="left:443px;top:624px;width:92px;height:15px;background:#ffffff"></div>
<div class="a" style="left:536px;top:624px;width:106px;height:15px;background:#ffffff"></div>
<div class="a" style="left:643px;top:624px;width:146px;height:15px;background:#ffffff"></div>
<div class="a" style="left:790px;top:624px;width:160px;height:15px;background:#ffffff"></div>
<div class="a" style="left:239px;top:640px;width:115px;height:15px;background:#f8f8fa"></div>
<div class="a" style="left:355px;top:640px;width:87px;height:15px;background:#e4efe0"></div>
<div class="a" style="left:443px;top:640px;width:92px;height:15px;background:#e4efe0"></div>
<div class="a" style="left:536px;top:640px;width:106px;height:15px;background:#e4efe0"></div>
<div class="a" style="left:643px;top:640px;width:146px;height:15px;background:#e4efe0"></div>
<div class="a" style="left:790px;top:640px;width:160px;height:15px;background:#e4efe0"></div>
<div class="a" style="left:239px;top:656px;width:115px;height:15px;background:#f8f8fa"></div>
<div class="a" style="left:355px;top:656px;width:87px;height:15px;background:#ffffff"></div>
<div class="a" style="left:443px;top:656px;width:92px;height:15px;background:#ffffff"></div>
<div class="a" style="left:536px;top:656px;width:106px;height:15px;background:#ffffff"></div>
<div class="a" style="left:643px;top:656px;width:146px;height:15px;background:#ffffff"></div>
<div class="a" style="left:790px;top:656px;width:160px;height:15px;background:#ffffff"></div>
<div class="a" style="left:239px;top:672px;width:115px;height:15px;background:#f8f8fa"></div>
<div class="a" style="left:355px;top:672px;width:87px;height:15px;background:#e4efe0"></div>
<div class="a" style="left:443px;top:672px;width:92px;height:15px;background:#e4efe0"></div>
<div class="a" style="left:536px;top:672px;width:106px;height:15px;background:#e4efe0"></div>
<div class="a" style="left:643px;top:672px;width:146px;height:15px;background:#e4efe0"></div>
<div class="a" style="left:790px;top:672px;width:160px;height:15px;background:#e4efe0"></div>
<div class="a" style="left:239px;top:688px;width:115px;height:15px;background:#f8f8fa"></div>
<div class="a" style="left:355px;top:688px;width:87px;height:15px;background:#ffffff"></div>
<div class="a" style="left:443px;top:688px;width:92px;height:15px;background:#ffffff"></div>
<div class="a" style="left:536px;top:688px;width:106px;height:15px;background:#ffffff"></div>
<div class="a" style="left:643px;top:688px;width:146px;height:15px;background:#ffffff"></div>
<div class="a" style="left:790px;top:688px;width:160px;height:15px;background:#ffffff"></div>
<div class="a" style="left:239px;top:704px;width:115px;height:15px;background:#f8f8fa"></div>
<div class="a" style="left:355px;top:704px;width:87px;height:15px;background:#e4efe0"></div>
<div class="a" style="left:443px;top:704px;width:92px;height:15px;background:#e4efe0"></div>
<div class="a" style="left:536px;top:704px;width:106px;height:15px;background:#e4efe0"></div>
<div class="a" style="left:643px;top:704px;width:146px;height:15px;background:#e4efe0"></div>
<div class="a" style="left:790px;top:704px;width:160px;height:15px;background:#e4efe0"></div>
<div class="a" style="left:239px;top:720px;width:115px;height:15px;background:#f8f8fa"></div>
<div class="a" style="left:355px;top:720px;width:87px;height:15px;background:#ffffff"></div>
<div class="a" style="left:443px;top:720px;width:92px;height:15px;background:#ffffff"></div>
<div class="a" style="left:536px;top:720px;width:106px;height:15px;background:#ffffff"></div>
<div class="a" style="left:643px;top:720px;width:146px;height:15px;background:#ffffff"></div>
<div class="a" style="left:790px;top:720px;width:160px;height:15px;background:#ffffff"></div>
<div class="a" style="left:239px;top:736px;width:115px;height:15px;background:#f8f8fa"></div>
<div class="a" style="left:355px;top:736px;width:87px;height:15px;background:#e4efe0"></div>
<div class="a" style="left:443px;top:736px;width:92px;height:15px;background:#e4efe0"></div>
<div class="a" style="left:536px;top:736px;width:106px;height:15px;background:#e4efe0"></div>
<div class="a" style="left:643px;top:736px;width:146px;height:15px;background:#e4efe0"></div>
<div class="a" style="left:790px;top:736px;width:160px;height:15px;background:#e4efe0"></div>
<div class="a" style="left:239px;top:752px;width:115px;height:15px;background:#f8f8fa"></div>
<div class="a" style="left:355px;top:752px;width:87px;height:15px;background:#ffffff"></div>
<div class="a" style="left:443px;top:752px;width:92px;height:15px;background:#ffffff"></div>
<div class="a" style="left:536px;top:752px;width:106px;height:15px;background:#ffffff"></div>
<div class="a" style="left:643px;top:752px;width:146px;height:15px;background:#ffffff"></div>
<div class="a" style="left:790px;top:752px;width:160px;height:15px;background:#ffffff"></div>
<div class="a" style="left:239px;top:768px;width:115px;height:15px;background:#f8f8fa"></div>
<div class="a" style="left:355px;top:768px;width:87px;height:15px;background:#e4efe0"></div>
<div class="a" style="left:443px;top:768px;width:92px;height:15px;background:#e4efe0"></div>
<div class="a" style="left:536px;top:768px;width:106px;height:15px;background:#e4efe0"></div>
<div class="a" style="left:643px;top:768px;width:146px;height:15px;background:#e4efe0"></div>
<div class="a" style="left:790px;top:768px;width:160px;height:15px;background:#e4efe0"></div>
<div class="a" style="left:239px;top:784px;width:115px;height:15px;background:#f8f8fa"></div>
<div class="a" style="left:355px;top:784px;width:87px;height:15px;background:#ffffff"></div>
<div class="a" style="left:443px;top:784px;width:92px;height:15px;background:#ffffff"></div>
<div class="a" style="left:536px;top:784px;width:106px;height:15px;background:#ffffff"></div>
<div class="a" style="left:643px;top:784px;width:146px;height:15px;background:#ffffff"></div>
<div class="a" style="left:790px;top:784px;width:160px;height:15px;background:#ffffff"></div>
<div class="a" style="left:239px;top:800px;width:115px;height:15px;background:#f8f8fa"></div>
<div class="a" style="left:355px;top:800px;width:87px;height:15px;background:#e4efe0"></div>
<div class="a" style="left:443px;top:800px;width:92px;height:15px;background:#e4efe0"></div>
<div class="a" style="left:536px;top:800px;width:106px;height:15px;background:#e4efe0"></div>
<div class="a" style="left:643px;top:800px;width:146px;height:15px;background:#e4efe0"></div>
<div class="a" style="left:790px;top:800px;width:160px;height:15px;background:#e4efe0"></div>
<div class="a" style="left:239px;top:816px;width:115px;height:15px;background:#f8f8fa"></div>
<div class="a" style="left:355px;top:816px;width:87px;height:15px;background:#ffffff"></div>
<div class="a" style="left:443px;top:816px;width:92px;height:15px;background:#ffffff"></div>
<div class="a" style="left:536px;top:816px;width:106px;height:15px;background:#ffffff"></div>
<div class="a" style="left:643px;top:816px;width:146px;height:15px;background:#ffffff"></div>
<div class="a" style="left:790px;top:816px;width:160px;height:15px;background:#ffffff"></div>
<div class="a" style="left:239px;top:832px;width:115px;height:15px;background:#f8f8fa"></div>
<div class="a" style="left:355px;top:832px;width:87px;height:15px;background:#e4efe0"></div>
<div class="a" style="left:443px;top:832px;width:92px;height:15px;background:#e4efe0"></div>
<div class="a" style="left:536px;top:832px;width:106px;height:15px;background:#e4efe0"></div>
<div class="a" style="left:643px;top:832px;width:146px;height:15px;background:#e4efe0"></div>
<div class="a" style="left:790px;top:832px;width:160px;height:15px;background:#e4efe0"></div>
<div class="a" style="left:239px;top:848px;width:115px;height:15px;background:#f8f8fa"></div>
<div class="a" style="left:355px;top:848px;width:87px;height:15px;background:#ffffff"></div>
<div class="a" style="left:443px;top:848px;width:92px;height:15px;background:#ffffff"></div>
<div class="a" style="left:536px;top:848px;width:106px;height:15px;background:#ffffff"></div>
<div class="a" style="left:643px;top:848px;width:146px;height:15px;background:#ffffff"></div>
<div class="a" style="left:790px;top:848px;width:160px;height:15px;background:#ffffff"></div>
<div class="a" style="left:239px;top:864px;width:115px;height:15px;background:#f8f8fa"></div>
<div class="a" style="left:355px;top:864px;width:87px;height:15px;background:#e4efe0"></div>
<div class="a" style="left:443px;top:864px;width:92px;height:15px;background:#e4efe0"></div>
<div class="a" style="left:536px;top:864px;width:106px;height:15px;background:#e4efe0"></div>
<div class="a" style="left:643px;top:864px;width:146px;height:15px;background:#e4efe0"></div>
<div class="a" style="left:790px;top:864px;width:160px;height:15px;background:#e4efe0"></div>
<div class="t" style="left:88.40px;top:576.19px;font-size:11px;line-height:16px;color:#1636a6;letter-spacing:-0.376px;">Business Year</div>
<div class="t" style="left:160.60px;top:576.19px;font-size:11px;line-height:16px;color:#1636a6;letter-spacing:-0.374px;">Business Month</div>
<div class="t" style="left:240.30px;top:576.19px;font-size:11px;line-height:16px;color:#000;letter-spacing:-0.340px;">Resource</div>
<div class="t" style="left:356.80px;top:576.19px;font-size:11px;line-height:16px;color:#1636a6;letter-spacing:-0.181px;">City</div>
<div class="t" style="left:444.00px;top:576.19px;font-size:11px;line-height:16px;color:#000;letter-spacing:-0.206px;">Dropped Call Rate</div>
<div class="t" style="left:536.80px;top:576.19px;font-size:11px;line-height:16px;color:#000;letter-spacing:-0.241px;">Dropped Call Rate LY</div>
<div class="t" style="left:644.00px;top:576.19px;font-size:11px;line-height:16px;color:#000;letter-spacing:-0.253px;">Dropped Call Rate Change LY</div>
<div class="t" style="left:790.80px;top:576.19px;font-size:11px;line-height:16px;color:#000;letter-spacing:-0.193px;">Dropped Call Rate % Change LY</div>
<div class="t" style="left:88.40px;top:592.19px;font-size:11px;line-height:16px;color:#1636a6;letter-spacing:-0.567px;">BY 2010</div>
<div class="t" style="left:160.60px;top:592.19px;font-size:11px;line-height:16px;color:#1636a6;letter-spacing:-0.209px;">Jan 2010</div>
<div class="t" style="left:240.30px;top:592.19px;font-size:11px;line-height:16px;color:#000;letter-spacing:-0.576px;">EH_Palomino_BSC_143</div>
<div class="t" style="left:356.40px;top:592.19px;font-size:11px;line-height:16px;color:#1636a6;letter-spacing:-0.763px;">SAN FRANCISCO</div>
<div class="t" style="left:498.90px;top:592.19px;font-size:11px;line-height:16px;color:#000;letter-spacing:0.303px;">0.62%</div>
<div class="t" style="left:605.30px;top:592.19px;font-size:11px;line-height:16px;color:#000;letter-spacing:0.453px;">0.74%</div>
<div class="t" style="left:748.70px;top:592.19px;font-size:11px;line-height:16px;color:#ff0000;letter-spacing:0.289px;">-0.12%</div>
<div class="t" style="left:904.30px;top:592.19px;font-size:11px;line-height:16px;color:#ff0000;letter-spacing:0.122px;">-15.95%</div>
<div class="t" style="left:240.30px;top:608.19px;font-size:11px;line-height:16px;color:#000;letter-spacing:-0.569px;">EH_Palomino_BTS_101</div>
<div class="t" style="left:356.40px;top:608.19px;font-size:11px;line-height:16px;color:#1636a6;letter-spacing:-0.763px;">SAN FRANCISCO</div>
<div class="t" style="left:498.90px;top:608.19px;font-size:11px;line-height:16px;color:#000;letter-spacing:0.303px;">0.64%</div>
<div class="t" style="left:605.30px;top:608.19px;font-size:11px;line-height:16px;color:#000;letter-spacing:0.453px;">0.73%</div>
<div class="t" style="left:748.70px;top:608.19px;font-size:11px;line-height:16px;color:#ff0000;letter-spacing:0.289px;">-0.10%</div>
<div class="t" style="left:904.30px;top:608.19px;font-size:11px;line-height:16px;color:#ff0000;letter-spacing:0.122px;">-13.09%</div>
<div class="t" style="left:240.30px;top:624.19px;font-size:11px;line-height:16px;color:#000;letter-spacing:-0.437px;">EH_Walker_BTS_902</div>
<div class="t" style="left:356.40px;top:624.19px;font-size:11px;line-height:16px;color:#1636a6;letter-spacing:-0.763px;">SAN FRANCISCO</div>
<div class="t" style="left:498.90px;top:624.19px;font-size:11px;line-height:16px;color:#000;letter-spacing:0.303px;">0.63%</div>
<div class="t" style="left:605.30px;top:624.19px;font-size:11px;line-height:16px;color:#000;letter-spacing:0.453px;">0.73%</div>
<div class="t" style="left:748.70px;top:624.19px;font-size:11px;line-height:16px;color:#ff0000;letter-spacing:0.289px;">-0.10%</div>
<div class="t" style="left:904.30px;top:624.19px;font-size:11px;line-height:16px;color:#ff0000;letter-spacing:0.122px;">-13.61%</div>
<div class="t" style="left:160.60px;top:640.19px;font-size:11px;line-height:16px;color:#1636a6;letter-spacing:-0.383px;">Feb 2010</div>
<div class="t" style="left:240.30px;top:640.19px;font-size:11px;line-height:16px;color:#000;letter-spacing:-0.576px;">EH_Palomino_BSC_143</div>
<div class="t" style="left:356.40px;top:640.19px;font-size:11px;line-height:16px;color:#1636a6;letter-spacing:-0.763px;">SAN FRANCISCO</div>
<div class="t" style="left:498.90px;top:640.19px;font-size:11px;line-height:16px;color:#000;letter-spacing:0.303px;">0.64%</div>
<div class="t" style="left:605.30px;top:640.19px;font-size:11px;line-height:16px;color:#000;letter-spacing:0.453px;">0.74%</div>
<div class="t" style="left:748.70px;top:640.19px;font-size:11px;line-height:16px;color:#ff0000;letter-spacing:0.289px;">-0.10%</div>
<div class="t" style="left:904.30px;top:640.19px;font-size:11px;line-height:16px;color:#ff0000;letter-spacing:0.122px;">-13.78%</div>
<div class="t" style="left:240.30px;top:656.19px;font-size:11px;line-height:16px;color:#000;letter-spacing:-0.569px;">EH_Palomino_BTS_101</div>
<div class="t" style="left:356.40px;top:656.19px;font-size:11px;line-height:16px;color:#1636a6;letter-spacing:-0.763px;">SAN FRANCISCO</div>
<div class="t" style="left:498.90px;top:656.19px;font-size:11px;line-height:16px;color:#000;letter-spacing:0.303px;">0.62%</div>
<div class="t" style="left:605.30px;top:656.19px;font-size:11px;line-height:16px;color:#000;letter-spacing:0.453px;">0.76%</div>
<div class="t" style="left:748.70px;top:656.19px;font-size:11px;line-height:16px;color:#ff0000;letter-spacing:0.289px;">-0.14%</div>
<div class="t" style="left:904.30px;top:656.19px;font-size:11px;line-height:16px;color:#ff0000;letter-spacing:0.122px;">-17.91%</div>
<div class="t" style="left:240.30px;top:672.19px;font-size:11px;line-height:16px;color:#000;letter-spacing:-0.437px;">EH_Walker_BTS_902</div>
<div class="t" style="left:356.40px;top:672.19px;font-size:11px;line-height:16px;color:#1636a6;letter-spacing:-0.763px;">SAN FRANCISCO</div>
<div class="t" style="left:498.90px;top:672.19px;font-size:11px;line-height:16px;color:#000;letter-spacing:0.303px;">0.63%</div>
<div class="t" style="left:605.30px;top:672.19px;font-size:11px;line-height:16px;color:#000;letter-spacing:0.453px;">0.74%</div>
<div class="t" style="left:748.70px;top:672.19px;font-size:11px;line-height:16px;color:#ff0000;letter-spacing:0.453px;">-0.11%</div>
<div class="t" style="left:904.30px;top:672.19px;font-size:11px;line-height:16px;color:#ff0000;letter-spacing:0.122px;">-15.31%</div>
<div class="t" style="left:160.60px;top:688.19px;font-size:11px;line-height:16px;color:#1636a6;letter-spacing:-0.267px;">Mar 2010</div>
<div class="t" style="left:240.30px;top:688.19px;font-size:11px;line-height:16px;color:#000;letter-spacing:-0.576px;">EH_Palomino_BSC_143</div>
<div class="t" style="left:356.40px;top:688.19px;font-size:11px;line-height:16px;color:#1636a6;letter-spacing:-0.763px;">SAN FRANCISCO</div>
<div class="t" style="left:498.90px;top:688.19px;font-size:11px;line-height:16px;color:#000;letter-spacing:0.303px;">0.63%</div>
<div class="t" style="left:605.30px;top:688.19px;font-size:11px;line-height:16px;color:#000;letter-spacing:0.453px;">0.75%</div>
<div class="t" style="left:748.70px;top:688.19px;font-size:11px;line-height:16px;color:#ff0000;letter-spacing:0.289px;">-0.12%</div>
<div class="t" style="left:904.30px;top:688.19px;font-size:11px;line-height:16px;color:#ff0000;letter-spacing:0.122px;">-16.07%</div>
<div class="t" style="left:240.30px;top:704.19px;font-size:11px;line-height:16px;color:#000;letter-spacing:-0.569px;">EH_Palomino_BTS_101</div>
<div class="t" style="left:356.40px;top:704.19px;font-size:11px;line-height:16px;color:#1636a6;letter-spacing:-0.763px;">SAN FRANCISCO</div>
<div class="t" style="left:498.90px;top:704.19px;font-size:11px;line-height:16px;color:#000;letter-spacing:0.303px;">0.65%</div>
<div class="t" style="left:605.30px;top:704.19px;font-size:11px;line-height:16px;color:#000;letter-spacing:0.453px;">0.73%</div>
<div class="t" style="left:748.70px;top:704.19px;font-size:11px;line-height:16px;color:#ff0000;letter-spacing:0.289px;">-0.09%</div>
<div class="t" style="left:904.30px;top:704.19px;font-size:11px;line-height:16px;color:#ff0000;letter-spacing:0.258px;">-11.74%</div>
<div class="t" style="left:240.30px;top:720.19px;font-size:11px;line-height:16px;color:#000;letter-spacing:-0.437px;">EH_Walker_BTS_902</div>
<div class="t" style="left:356.40px;top:720.19px;font-size:11px;line-height:16px;color:#1636a6;letter-spacing:-0.763px;">SAN FRANCISCO</div>
<div class="t" style="left:498.90px;top:720.19px;font-size:11px;line-height:16px;color:#000;letter-spacing:0.303px;">0.64%</div>
<div class="t" style="left:605.30px;top:720.19px;font-size:11px;line-height:16px;color:#000;letter-spacing:0.453px;">0.75%</div>
<div class="t" style="left:748.70px;top:720.19px;font-size:11px;line-height:16px;color:#ff0000;letter-spacing:0.453px;">-0.11%</div>
<div class="t" style="left:904.30px;top:720.19px;font-size:11px;line-height:16px;color:#ff0000;letter-spacing:0.122px;">-14.34%</div>
<div class="t" style="left:160.60px;top:736.19px;font-size:11px;line-height:16px;color:#1636a6;letter-spacing:-0.121px;">Apr 2010</div>
<div class="t" style="left:240.30px;top:736.19px;font-size:11px;line-height:16px;color:#000;letter-spacing:-0.576px;">EH_Palomino_BSC_143</div>
<div class="t" style="left:356.40px;top:736.19px;font-size:11px;line-height:16px;color:#1636a6;letter-spacing:-0.763px;">SAN FRANCISCO</div>
<div class="t" style="left:498.90px;top:736.19px;font-size:11px;line-height:16px;color:#000;letter-spacing:0.303px;">0.65%</div>
<div class="t" style="left:605.30px;top:736.19px;font-size:11px;line-height:16px;color:#000;letter-spacing:0.453px;">0.74%</div>
<div class="t" style="left:748.70px;top:736.19px;font-size:11px;line-height:16px;color:#ff0000;letter-spacing:0.289px;">-0.09%</div>
<div class="t" style="left:904.30px;top:736.19px;font-size:11px;line-height:16px;color:#ff0000;letter-spacing:0.122px;">-12.07%</div>
<div class="t" style="left:240.30px;top:752.19px;font-size:11px;line-height:16px;color:#000;letter-spacing:-0.569px;">EH_Palomino_BTS_101</div>
<div class="t" style="left:356.40px;top:752.19px;font-size:11px;line-height:16px;color:#1636a6;letter-spacing:-0.763px;">SAN FRANCISCO</div>
<div class="t" style="left:498.90px;top:752.19px;font-size:11px;line-height:16px;color:#000;letter-spacing:0.303px;">0.64%</div>
<div class="t" style="left:605.30px;top:752.19px;font-size:11px;line-height:16px;color:#000;letter-spacing:0.453px;">0.77%</div>
<div class="t" style="left:748.70px;top:752.19px;font-size:11px;line-height:16px;color:#ff0000;letter-spacing:0.289px;">-0.12%</div>
<div class="t" style="left:904.30px;top:752.19px;font-size:11px;line-height:16px;color:#ff0000;letter-spacing:0.122px;">-16.15%</div>
<div class="t" style="left:240.30px;top:768.19px;font-size:11px;line-height:16px;color:#000;letter-spacing:-0.437px;">EH_Walker_BTS_902</div>
<div class="t" style="left:356.40px;top:768.19px;font-size:11px;line-height:16px;color:#1636a6;letter-spacing:-0.763px;">SAN FRANCISCO</div>
<div class="t" style="left:498.90px;top:768.19px;font-size:11px;line-height:16px;color:#000;letter-spacing:0.303px;">0.64%</div>
<div class="t" style="left:605.30px;top:768.19px;font-size:11px;line-height:16px;color:#000;letter-spacing:0.453px;">0.76%</div>
<div class="t" style="left:748.70px;top:768.19px;font-size:11px;line-height:16px;color:#ff0000;letter-spacing:0.289px;">-0.12%</div>
<div class="t" style="left:904.30px;top:768.19px;font-size:11px;line-height:16px;color:#ff0000;letter-spacing:0.122px;">-15.22%</div>
<div class="t" style="left:160.60px;top:784.19px;font-size:11px;line-height:16px;color:#1636a6;letter-spacing:-0.330px;">May 2010</div>
<div class="t" style="left:240.30px;top:784.19px;font-size:11px;line-height:16px;color:#000;letter-spacing:-0.576px;">EH_Palomino_BSC_143</div>
<div class="t" style="left:356.40px;top:784.19px;font-size:11px;line-height:16px;color:#1636a6;letter-spacing:-0.763px;">SAN FRANCISCO</div>
<div class="t" style="left:498.90px;top:784.19px;font-size:11px;line-height:16px;color:#000;letter-spacing:0.303px;">0.65%</div>
<div class="t" style="left:605.30px;top:784.19px;font-size:11px;line-height:16px;color:#000;letter-spacing:0.453px;">0.77%</div>
<div class="t" style="left:748.70px;top:784.19px;font-size:11px;line-height:16px;color:#ff0000;letter-spacing:0.289px;">-0.12%</div>
<div class="t" style="left:904.30px;top:784.19px;font-size:11px;line-height:16px;color:#ff0000;letter-spacing:0.122px;">-15.43%</div>
<div class="t" style="left:240.30px;top:800.19px;font-size:11px;line-height:16px;color:#000;letter-spacing:-0.569px;">EH_Palomino_BTS_101</div>
<div class="t" style="left:356.40px;top:800.19px;font-size:11px;line-height:16px;color:#1636a6;letter-spacing:-0.763px;">SAN FRANCISCO</div>
<div class="t" style="left:498.90px;top:800.19px;font-size:11px;line-height:16px;color:#000;letter-spacing:0.303px;">0.65%</div>
<div class="t" style="left:605.30px;top:800.19px;font-size:11px;line-height:16px;color:#000;letter-spacing:0.453px;">0.72%</div>
<div class="t" style="left:748.70px;top:800.19px;font-size:11px;line-height:16px;color:#ff0000;letter-spacing:0.289px;">-0.07%</div>
<div class="t" style="left:910.40px;top:800.19px;font-size:11px;line-height:16px;color:#ff0000;letter-spacing:0.149px;">-9.14%</div>
<div class="t" style="left:240.30px;top:816.19px;font-size:11px;line-height:16px;color:#000;letter-spacing:-0.437px;">EH_Walker_BTS_902</div>
<div class="t" style="left:356.40px;top:816.19px;font-size:11px;line-height:16px;color:#1636a6;letter-spacing:-0.763px;">SAN FRANCISCO</div>
<div class="t" style="left:498.90px;top:816.19px;font-size:11px;line-height:16px;color:#000;letter-spacing:0.303px;">0.65%</div>
<div class="t" style="left:605.30px;top:816.19px;font-size:11px;line-height:16px;color:#000;letter-spacing:0.453px;">0.75%</div>
<div class="t" style="left:748.70px;top:816.19px;font-size:11px;line-height:16px;color:#ff0000;letter-spacing:0.453px;">-0.11%</div>
<div class="t" style="left:904.30px;top:816.19px;font-size:11px;line-height:16px;color:#ff0000;letter-spacing:0.122px;">-13.99%</div>
<div class="t" style="left:160.60px;top:832.19px;font-size:11px;line-height:16px;color:#1636a6;letter-spacing:-0.209px;">Jun 2010</div>
<div class="t" style="left:240.30px;top:832.19px;font-size:11px;line-height:16px;color:#000;letter-spacing:-0.576px;">EH_Palomino_BSC_143</div>
<div class="t" style="left:356.40px;top:832.19px;font-size:11px;line-height:16px;color:#1636a6;letter-spacing:-0.763px;">SAN FRANCISCO</div>
<div class="t" style="left:498.90px;top:832.19px;font-size:11px;line-height:16px;color:#000;letter-spacing:0.303px;">0.66%</div>
<div class="t" style="left:605.30px;top:832.19px;font-size:11px;line-height:16px;color:#000;letter-spacing:0.453px;">0.70%</div>
<div class="t" style="left:748.70px;top:832.19px;font-size:11px;line-height:16px;color:#ff0000;letter-spacing:0.289px;">-0.05%</div>
<div class="t" style="left:910.40px;top:832.19px;font-size:11px;line-height:16px;color:#ff0000;letter-spacing:0.149px;">-6.88%</div>
<div class="t" style="left:240.30px;top:848.19px;font-size:11px;line-height:16px;color:#000;letter-spacing:-0.576px;">EH_Palomino_BSC_148</div>
<div class="t" style="left:356.40px;top:848.19px;font-size:11px;line-height:16px;color:#1636a6;letter-spacing:-0.763px;">SAN FRANCISCO</div>
<div class="t" style="left:498.90px;top:848.19px;font-size:11px;line-height:16px;color:#000;letter-spacing:0.303px;">0.03%</div>
<div class="t" style="left:240.30px;top:864.19px;font-size:11px;line-height:16px;color:#000;letter-spacing:-0.569px;">EH_Palomino_BTS_101</div>
<div class="t" style="left:356.40px;top:864.19px;font-size:11px;line-height:16px;color:#1636a6;letter-spacing:-0.763px;">SAN FRANCISCO</div>
</div></div>
<div class="a" style="left:974px;top:50px;width:17px;height:812px;background:linear-gradient(90deg,#f0eee4 0,#f8f7f1 40%,#fefefb 100%)"></div>
<div class="a" style="left:22px;top:862px;width:952px;height:17px;background:linear-gradient(#f0eee4 0,#f8f7f1 40%,#fefefb 100%)"></div>
<div class="a" style="left:974px;top:862px;width:17px;height:17px;background:#ece9d8"></div>
<div class="a" style="left:975px;top:51px;width:15px;height:16px;background:linear-gradient(135deg,#cfdbfc 0,#bccbf7 60%,#aebff0 100%);border:1px solid #ffffff;border-radius:3px;box-shadow:1px 1px 0 0 #92abd8, inset 0 0 0 1px #bccbf8"></div>
<div class="a" style="left:975px;top:845px;width:15px;height:16px;background:linear-gradient(135deg,#cfdbfc 0,#bccbf7 60%,#aebff0 100%);border:1px solid #ffffff;border-radius:3px;box-shadow:1px 1px 0 0 #92abd8, inset 0 0 0 1px #bccbf8"></div>
<div class="a" style="left:975px;top:68px;width:15px;height:639px;background:linear-gradient(90deg,#c9d6fb 0,#c2d1f8 50%,#b4c6f3 100%);border:1px solid #ffffff;border-radius:3px;box-shadow:1px 1px 0 0 #92abd8, inset 0 0 0 1px #bccbf8"></div>
<div class="a" style="left:22px;top:863px;width:16px;height:15px;background:linear-gradient(135deg,#cfdbfc 0,#bccbf7 60%,#aebff0 100%);border:1px solid #ffffff;border-radius:3px;box-shadow:1px 1px 0 0 #92abd8, inset 0 0 0 1px #bccbf8"></div>
<div class="a" style="left:957px;top:863px;width:16px;height:15px;background:linear-gradient(135deg,#cfdbfc 0,#bccbf7 60%,#aebff0 100%);border:1px solid #ffffff;border-radius:3px;box-shadow:1px 1px 0 0 #92abd8, inset 0 0 0 1px #bccbf8"></div>
<div class="a" style="left:39px;top:863px;width:871px;height:15px;background:linear-gradient(#c9d6fb 0,#c2d1f8 50%,#b4c6f3 100%);border:1px solid #ffffff;border-radius:3px;box-shadow:1px 1px 0 0 #92abd8, inset 0 0 0 1px #bccbf8"></div>
<svg width="1001" height="894" style="left:0;top:0">
<g fill="none" stroke="#4d5a7c" stroke-width="2.1">
<path d="M978.6 61.2 L982.6 57.2 L986.6 61.2"/>
<path d="M978.6 851 L982.6 855 L986.6 851"/>
<path d="M31.2 866.6 L27.2 870.6 L31.2 874.6"/>
<path d="M963 866.6 L967 870.6 L963 874.6"/>
</g>
<g stroke="#f2f5ff" stroke-width="1"><path d="M979 384.5h6M979 386.5h6M979 388.5h6M979 390.5h6"/><path d="M470.5 867v6M472.5 867v6M474.5 867v6M476.5 867v6"/></g>
<g stroke="#86a4ec" stroke-width="1"><path d="M980 385.5h6M980 387.5h6M980 389.5h6M980 391.5h6"/><path d="M471.5 868v6M473.5 868v6M475.5 868v6M477.5 868v6"/></g>
</svg>
</div>
</body></html>
